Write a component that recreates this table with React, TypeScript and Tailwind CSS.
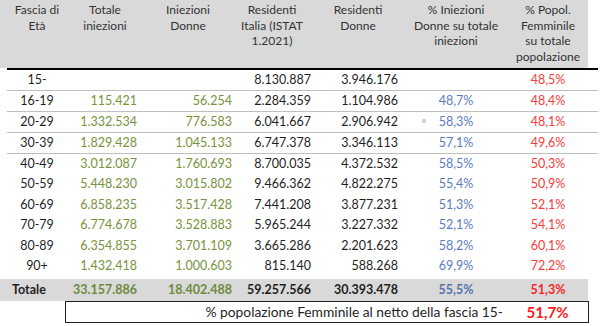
import React from 'react'

type Row = {
  age: string
  tot?: string
  donne?: string
  resIt: string
  resDonne: string
  pctIni?: string
  pctPop: string
  line?: boolean
  dot?: boolean
}

const rows: Row[] = [
  { age: '15-', resIt: '8.130.887', resDonne: '3.946.176', pctPop: '48,5%', line: true },
  { age: '16-19', tot: '115.421', donne: '56.254', resIt: '2.284.359', resDonne: '1.104.986', pctIni: '48,7%', pctPop: '48,4%', line: true },
  { age: '20-29', tot: '1.332.534', donne: '776.583', resIt: '6.041.667', resDonne: '2.906.942', pctIni: '58,3%', pctPop: '48,1%', line: true, dot: true },
  { age: '30-39', tot: '1.829.428', donne: '1.045.133', resIt: '6.747.378', resDonne: '3.346.113', pctIni: '57,1%', pctPop: '49,6%', line: true },
  { age: '40-49', tot: '3.012.087', donne: '1.760.693', resIt: '8.700.035', resDonne: '4.372.532', pctIni: '58,5%', pctPop: '50,3%' },
  { age: '50-59', tot: '5.448.230', donne: '3.015.802', resIt: '9.466.362', resDonne: '4.822.275', pctIni: '55,4%', pctPop: '50,9%' },
  { age: '60-69', tot: '6.858.235', donne: '3.517.428', resIt: '7.441.208', resDonne: '3.877.231', pctIni: '51,3%', pctPop: '52,1%' },
  { age: '70-79', tot: '6.774.678', donne: '3.528.883', resIt: '5.965.244', resDonne: '3.227.332', pctIni: '52,1%', pctPop: '54,1%' },
  { age: '80-89', tot: '6.354.855', donne: '3.701.109', resIt: '3.665.286', resDonne: '2.201.623', pctIni: '58,2%', pctPop: '60,1%' },
  { age: '90+', tot: '1.432.418', donne: '1.000.603', resIt: '815.140', resDonne: '588.268', pctIni: '69,9%', pctPop: '72,2%' },
]

const headers = [
  ['Fascia di', 'Età'],
  ['Totale', 'iniezioni'],
  ['Iniezioni', 'Donne'],
  ['Residenti', 'Italia (ISTAT', '1.2021)'],
  ['Residenti', 'Donne'],
  ['% Iniezioni', 'Donne su totale', 'iniezioni'],
  ['% Popol.', 'Femminile', 'su totale', 'popolazione'],
]

const cols = 'grid grid-cols-[60px_76px_90px_78px_94px_102px_82px]'

export default function App() {
  return (
    <div
      className="relative h-[326px] w-[600px] overflow-hidden bg-white text-[12.5px] text-[#1f1f1f]"
      style={{ fontFamily: 'Lato, "Open Sans", sans-serif' }}
    >
      <div className="h-[68px] w-[588px] bg-[#d9d9d9] pl-[7px] pt-[2px]">
        <div className={`${cols} text-[12px] leading-[15.6px] text-[#333]`}>
          {headers.map((lines, i) => (
            <div key={i} className="text-center">
              {lines.map((l) => (
                <div key={l}>{l}</div>
              ))}
            </div>
          ))}
        </div>
      </div>
      <div className="ml-[7px] h-[2px] w-[591px] bg-black" />

      <div className="ml-[7px] w-[591px]">
        {rows.map((r) => (
          <div
            key={r.age}
            className={`${cols} items-center ${
              r.line ? 'h-[21px] border-b border-[#bfbfbf]' : 'h-[20.5px]'
            }`}
          >
            <div className="text-center">{r.age}</div>
            <div className="pr-[6px] text-right text-[#77933c]">{r.tot}</div>
            <div className="pr-[1px] text-right text-[#77933c]">{r.donne}</div>
            <div className="text-right">{r.resIt}</div>
            <div className="pr-[7px] text-right">{r.resDonne}</div>
            <div className="relative text-center text-[#5b7bbd]">
              {r.dot && (
                <span className="absolute left-[17px] top-[6px] h-[4px] w-[4px] rounded-full border border-[#b5b5b5]" />
              )}
              {r.pctIni}
            </div>
            <div className="text-center text-[#f83a3a]">{r.pctPop}</div>
          </div>
        ))}
      </div>

      <div className="mt-[2px] h-[22px] w-[588px] bg-[#d9d9d9] pl-[7px] font-bold">
        <div className={`${cols} h-full items-center`}>
          <div className="pl-[5px]">Totale</div>
          <div className="pr-[6px] text-right text-[#6e8b3d]">33.157.886</div>
          <div className="pr-[1px] text-right text-[#6e8b3d]">18.402.488</div>
          <div className="text-right">59.257.566</div>
          <div className="pr-[7px] text-right">30.393.478</div>
          <div className="text-center text-[#5672ad]">55,5%</div>
          <div className="text-center text-[#f0282d]">51,3%</div>
        </div>
      </div>

      <div className="ml-[65px] flex h-[22px] w-[524px] items-center border border-[#222]">
        <div className="flex-1 pr-[4px] text-right text-[13.8px]">
          % popolazione Femminile al netto della fascia 15-
        </div>
        <div className="w-[81px] text-center text-[15px] font-bold text-[#ff1a1a]">51,7%</div>
      </div>
    </div>
  )
}
